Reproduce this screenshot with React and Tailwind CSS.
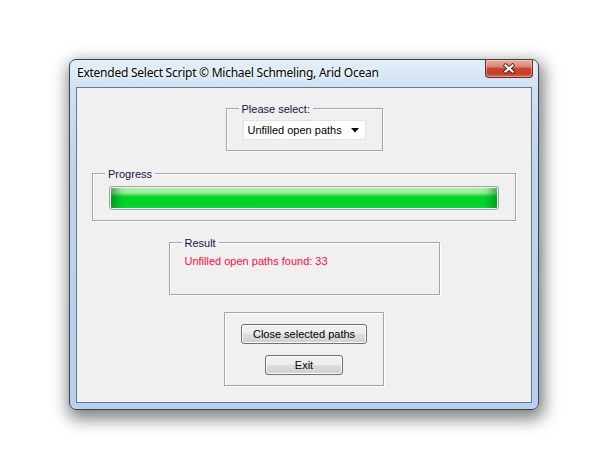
import React from "react";

const ui = { fontFamily: '"Liberation Sans", Arial, sans-serif' };
const title = { fontFamily: '"Noto Sans", "Open Sans", sans-serif' };

function Group({ label, className, children }) {
  return (
    <div
      className={
        "relative border border-[#a6a6a6] shadow-[inset_1px_1px_0_#ffffff,1px_1px_0_#ffffff] " +
        className
      }
    >
      {label && (
        <span className="absolute left-[12px] top-[-6px] bg-[#f0f0f0] px-[3px] text-[11px] leading-[13px] text-[#14144a]">
          {label}
        </span>
      )}
      {children}
    </div>
  );
}

export default function App() {
  return (
    <div className="w-[600px] h-[460px] bg-white pl-[69px] pt-[59px]" style={ui}>
      <div className="relative flex flex-col w-[470px] h-[351px] rounded-[7px] border border-[#3b4450] bg-[linear-gradient(180deg,#e4eef9_0%,#cfe1f4_8%,#bdd5ef_30%,#b6d0ee_100%)] shadow-[2px_6px_16px_3px_rgba(0,0,0,0.5)]">
        <div className="h-[27px] flex items-center pl-[7px] pb-[1px]">
          <span className="text-[12px] text-black tracking-[-0.25px] [text-shadow:0_0_6px_#ffffff,0_0_3px_#ffffff]" style={title}>
            Extended Select Script © Michael Schmeling, Arid Ocean
          </span>
        </div>
        <div className="absolute top-0 right-[5px] w-[48px] h-[18px] rounded-b-[4px] border border-t-0 border-[#6b2a22] bg-[linear-gradient(180deg,#e9aea2_0%,#dc8373_40%,#c9472f_50%,#c53e28_80%,#d76b53_100%)] shadow-[inset_0_0_0_1px_rgba(255,220,210,0.45)] flex items-center justify-center">
          <svg width="14" height="11" viewBox="0 0 14 11">
            <path d="M3.5 2.5 L10.5 8.5 M10.5 2.5 L3.5 8.5" stroke="#4a1e18" strokeWidth="3.8" strokeLinecap="square" />
            <path d="M3.5 2.5 L10.5 8.5 M10.5 2.5 L3.5 8.5" stroke="#ffffff" strokeWidth="2.2" strokeLinecap="square" />
          </svg>
        </div>
        <div className="mx-[6px] w-[456px] h-[316px] border border-[#6d7886] bg-[#f0f0f0] flex flex-col items-center">
          <Group label="Please select:" className="mt-[20px] w-[157px] h-[43px] pt-[11px] pl-[16px]">
            <div className="w-[123px] h-[20px] bg-white border border-[#e2e2e2] flex items-center pl-[4px] pr-[6px] pt-[1px] text-[11px] text-black">
              <span className="flex-1">Unfilled open paths</span>
              <svg width="8" height="5" viewBox="0 0 8 5"><path d="M0 0 H8 L4 4.5 Z" fill="#000" /></svg>
            </div>
          </Group>
          <Group label="Progress" className="mt-[22px] w-[424px] h-[48px] pt-[12px] pl-[16px]">
            <div className="w-[390px] h-[24px] rounded-[3px] border border-[#a3a3a3] p-[1px] bg-[#e8f5e8]">
              <div className="w-full h-full rounded-[1px] bg-[linear-gradient(180deg,#b8f3b9_0%,#93ec95_25%,#3ddd52_36%,#00d52a_45%,#00d42a_82%,#14db3c_100%)] shadow-[inset_14px_0_10px_-8px_rgba(0,110,25,0.55),inset_-14px_0_10px_-8px_rgba(0,110,25,0.55)]" />
            </div>
          </Group>
          <Group label="Result" className="mt-[21px] w-[271px] h-[53px] pt-[12px] pl-[15px]">
            <div className="text-[11px] leading-[13px] text-[#ff0a3c]">Unfilled open paths found: 33</div>
          </Group>
          <Group className="mt-[17px] w-[160px] h-[74px] pt-[11px] flex flex-col items-center gap-[11px]">
            <button className="w-[126px] h-[20px] rounded-[3px] border border-[#707070] bg-[linear-gradient(180deg,#f2f2f2_0%,#ebebeb_48%,#dddddd_52%,#cfcfcf_100%)] shadow-[inset_0_0_0_1px_#fcfcfc] text-[11px] text-black leading-[16px]">
              Close selected paths
            </button>
            <button className="w-[78px] h-[20px] rounded-[3px] border border-[#707070] bg-[linear-gradient(180deg,#f2f2f2_0%,#ebebeb_48%,#dddddd_52%,#cfcfcf_100%)] shadow-[inset_0_0_0_1px_#fcfcfc] text-[11px] text-black leading-[16px]">
              Exit
            </button>
          </Group>
        </div>
      </div>
    </div>
  );
}
